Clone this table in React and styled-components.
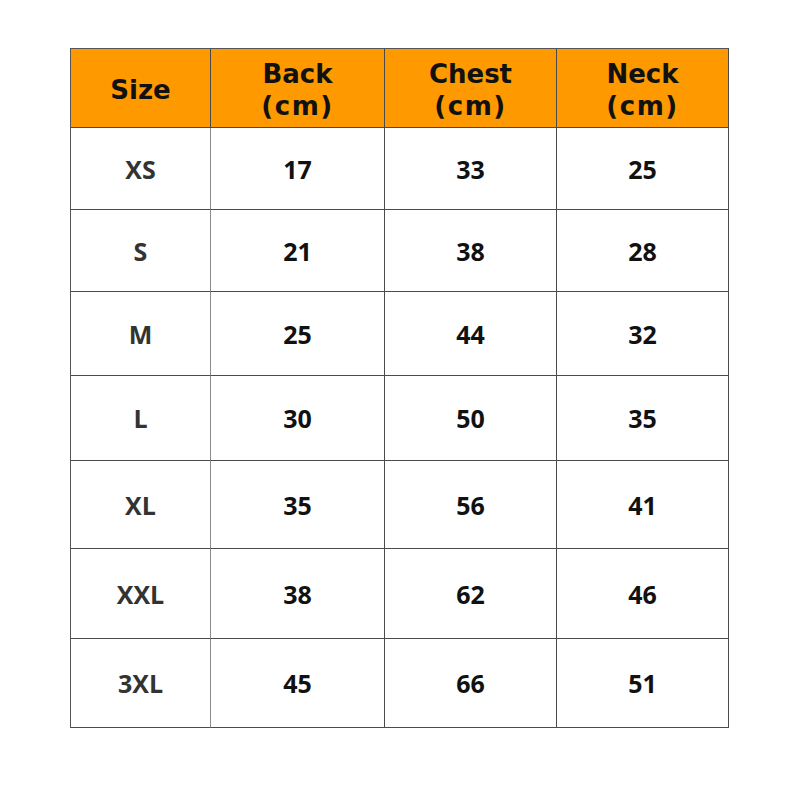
import React from "react";
import styled, { createGlobalStyle } from "styled-components";

const GlobalStyle = createGlobalStyle`
  html, body {
    margin: 0;
    padding: 0;
    background: #fff;
  }
`;

const Page = styled.div`
  width: 800px;
  height: 799px;
  padding: 48px 0 0 70px;
  box-sizing: border-box;
  background: #fff;
`;

const Table = styled.div`
  display: grid;
  width: 659px;
  grid-template-columns: 140px 174px 172px 172px;
  grid-template-rows: 79px 82px 82px 84px 85px 88px 90px 89px;
  border-top: 1px solid #555;
  border-left: 1px solid #555;
  box-sizing: border-box;
`;

const Cell = styled.div`
  display: flex;
  align-items: center;
  justify-content: center;
  text-align: center;
  border-right: 1px solid ${(p) => (p.$light ? "#8a8a8a" : "#4a4a4a")};
  border-bottom: 1px solid #4a4a4a;
  background: ${(p) => (p.$head ? "#ff9900" : "#fff")};
`;

const HeadText = styled.div`
  font-family: "DejaVu Sans", Verdana, sans-serif;
  font-weight: bold;
  font-size: 26px;
  line-height: 32px;
  color: #111;
  padding-top: 3px;
`;

const Unit = styled.span`
  letter-spacing: 1.5px;
`;

const BodyText = styled.div`
  font-family: "Open Sans", "Noto Sans", sans-serif;
  font-weight: 700;
  font-size: 25px;
  color: ${(p) => (p.$label ? "#333" : "#111")};
`;

const headers = ["Back", "Chest", "Neck"];

const rows = [
  ["XS", 17, 33, 25],
  ["S", 21, 38, 28],
  ["M", 25, 44, 32],
  ["L", 30, 50, 35],
  ["XL", 35, 56, 41],
  ["XXL", 38, 62, 46],
  ["3XL", 45, 66, 51],
];

export default function App() {
  return (
    <>
      <GlobalStyle />
      <Page>
        <Table>
          <Cell $head>
            <HeadText>Size</HeadText>
          </Cell>
          {headers.map((h) => (
            <Cell $head key={h}>
              <HeadText>
                {h}
                <br />
                <Unit>(cm)</Unit>
              </HeadText>
            </Cell>
          ))}
          {rows.map((r) =>
            r.map((v, i) => (
              <Cell key={r[0] + i} $light={i === 0}>
                <BodyText $label={i === 0}>{v}</BodyText>
              </Cell>
            ))
          )}
        </Table>
      </Page>
    </>
  );
}
